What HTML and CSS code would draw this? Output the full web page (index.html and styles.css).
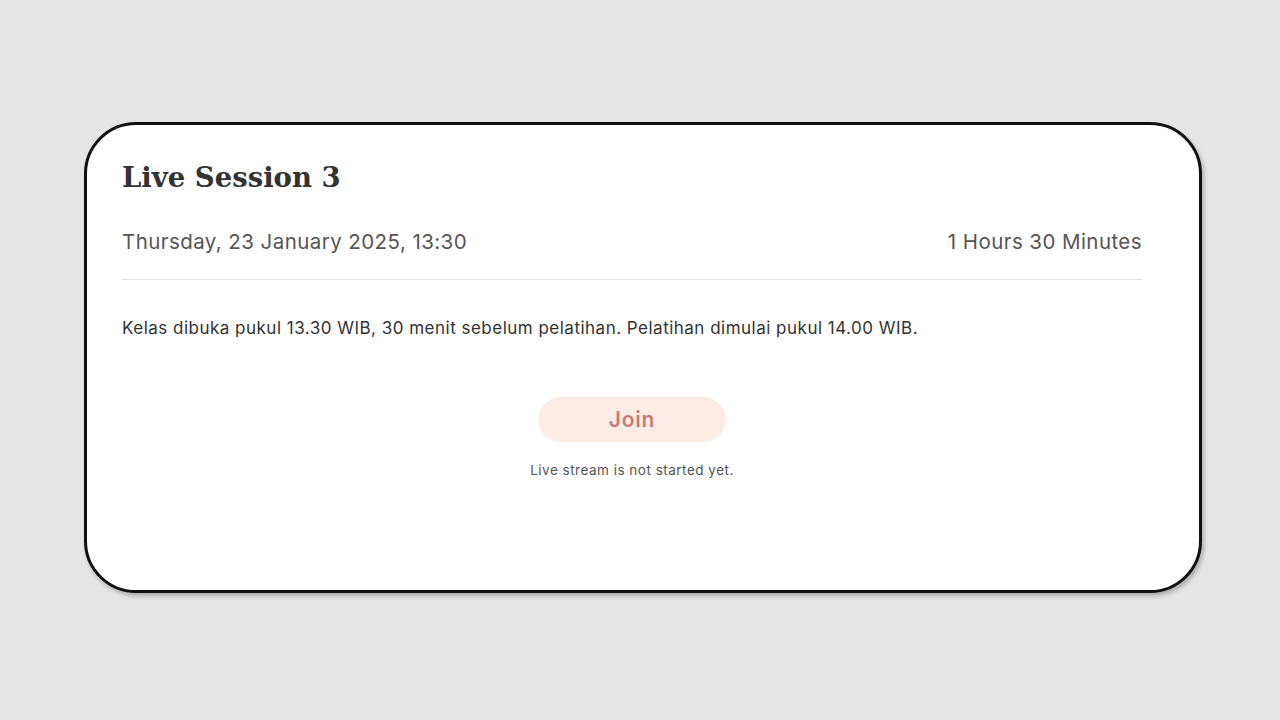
FILE: index.html
```html
<!DOCTYPE html>
<html>
<head>
<meta charset="utf-8">
<link rel="stylesheet" href="styles.css">
</head>
<body>
<div class="page">
  <div class="card">
    <h1 class="title">Live Session 3</h1>
    <div class="meta">
      <span>Thursday, 23 January 2025, 13:30</span>
      <span>1 Hours 30 Minutes</span>
    </div>
    <p class="desc">Kelas dibuka pukul 13.30 WIB, 30 menit sebelum pelatihan. Pelatihan dimulai pukul 14.00 WIB.</p>
    <div class="action">
      <button class="join">Join</button>
      <div class="note">Live stream is not started yet.</div>
    </div>
  </div>
</div>
</body>
</html>
```
FILE: styles.css
```css
html, body {
  margin: 0;
  padding: 0;
  background: #e5e5e5;
}
body {
  font-family: Inter, "Noto Sans", sans-serif;
  color: #333;
}
.page {
  width: 1280px;
  height: 720px;
  box-sizing: border-box;
  padding-top: 122px;
  padding-left: 84px;
}
.card {
  width: 1118px;
  height: 471px;
  box-sizing: border-box;
  background: #fff;
  border: 3px solid #111;
  border-radius: 52px;
  box-shadow: 2px 3px 4px rgba(0,0,0,0.25);
  padding: 33px 57px 0 35px;
}
.title {
  margin: 0;
  font-family: "DejaVu Serif", serif;
  font-weight: bold;
  font-size: 27.5px;
  line-height: 38px;
  color: #333;
}
.meta {
  display: flex;
  justify-content: space-between;
  margin-top: 32px;
  font-size: 20.5px;
  letter-spacing: 0.43px;
  line-height: 28px;
  color: #555;
  padding-bottom: 23px;
  border-bottom: 1px solid #e3e3e3;
}
.desc {
  margin: 37px 0 0;
  font-size: 17px;
  letter-spacing: 0.49px;
  line-height: 22px;
  color: #333;
}
.action {
  display: flex;
  flex-direction: column;
  align-items: center;
  margin-top: 58px;
}
.join {
  width: 188px;
  height: 45px;
  border: none;
  border-radius: 23px;
  background: #fbede6;
  color: #c97a78;
  font-family: Inter, sans-serif;
  font-weight: 600;
  font-size: 21px;
  letter-spacing: 0.8px;
}
.note {
  margin-top: 20px;
  font-size: 13.5px;
  letter-spacing: 0.5px;
  color: #555;
}
```
